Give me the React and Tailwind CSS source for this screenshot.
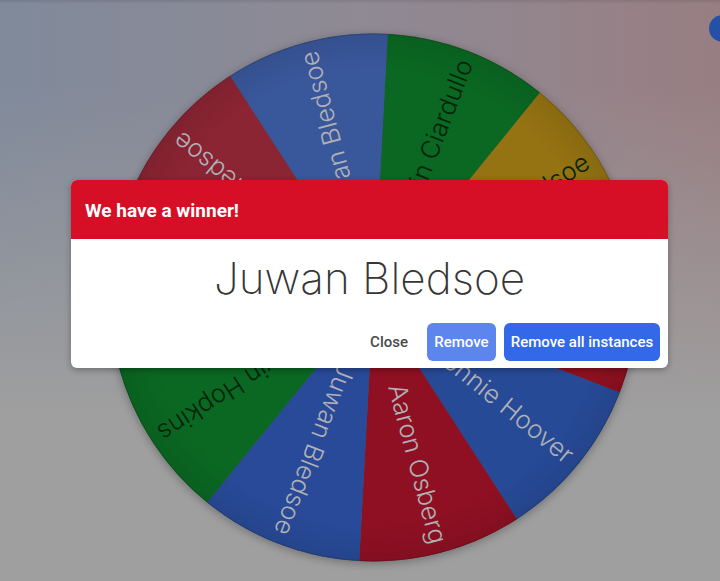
const SLICES = [
  { color: "#0a6822", text: "Kevin Ciardullo", dark: true },
  { color: "#957312", text: "Juwan Bledsoe", dark: true },
  { color: "#8e1020", text: "Aaron Osberg" },
  { color: "#274a97", text: "Donnie Hoover" },
  { color: "#8e1022", text: "Aaron Osberg" },
  { color: "#284a98", text: "Juwan Bledsoe" },
  { color: "#0a6822", text: "Kevin Hopkins", dark: true },
  { color: "#957312", text: "Kevin Ciardullo", dark: true },
  { color: "#8b2433", text: "Juwan Bledsoe" },
  { color: "#39579b", text: "Juwan Bledsoe" },
];

const CX = 373.5;
const CY = 297.5;
const R = 264;
const START = 3.1;

const point = (deg, r) => {
  const a = ((deg - 90) * Math.PI) / 180;
  return `${CX + r * Math.cos(a)} ${CY + r * Math.sin(a)}`;
};

const Wheel = () => (
  <svg width="720" height="581" viewBox="0 0 720 581" className="block">
    <defs>
      <radialGradient id="rim" gradientUnits="userSpaceOnUse" cx={CX} cy={CY} r={R}>
        <stop offset="0.86" stopColor="#000" stopOpacity="0" />
        <stop offset="1" stopColor="#000" stopOpacity="0.08" />
      </radialGradient>
      <filter id="shadow" x="-10%" y="-10%" width="120%" height="120%">
        <feDropShadow dx="0" dy="2" stdDeviation="5" floodColor="#000" floodOpacity="0.3" />
      </filter>
    </defs>
    <circle cx={CX} cy={CY} r={R} fill="#555" filter="url(#shadow)" />
    {SLICES.map((s, i) => {
      const a = START + i * 36;
      return (
        <path
          key={i}
          fill={s.color}
          d={`M${CX} ${CY} L${point(a, R)} A${R} ${R} 0 0 1 ${point(a + 36, R)} Z`}
        />
      );
    })}
    <circle cx={CX} cy={CY} r={R} fill="url(#rim)" />
    <circle cx={CX} cy={CY} r={R - 0.5} fill="none" stroke="#000" strokeOpacity="0.12" />
    {SLICES.map((s, i) => {
      const mid = START + i * 36 + 18;
      return (
        <text
          key={i}
          transform={`translate(${CX} ${CY}) rotate(${mid - 90})`}
          x="254"
          y="9"
          textAnchor="end"
          fontSize="25.5"
          fontWeight="300"
          fontFamily="Inter, sans-serif"
          fill={s.dark ? "#04230c" : "#b0b0b6"}
        >
          {s.text}
        </text>
      );
    })}
  </svg>
);

const App = () => {
  return (
    <div className="relative w-[720px] h-[581px] overflow-hidden bg-[#9f9f9f]">
      <div className="absolute inset-0 bg-[linear-gradient(90deg,#808a9b,#8f8a94_50%,#987e82)]" />
      <div className="absolute inset-0 bg-[linear-gradient(180deg,#9f9f9f00_15%,#9f9f9f_72%)]" />
      <div className="absolute inset-x-0 top-0 h-[4px] bg-gradient-to-b from-black/10 to-transparent" />
      <div className="absolute inset-0">
        <Wheel />
      </div>
      <div className="absolute top-[15px] right-[-16px] w-[27px] h-[27px] rounded-full bg-[#2450a8]" />
      <div className="absolute left-[71px] top-[180px] w-[597px] h-[188px] rounded-md bg-white overflow-hidden shadow-[0_2px_6px_rgba(0,0,0,0.3)] flex flex-col font-['Roboto',sans-serif]">
        <div className="h-[59px] bg-[#d60f26] flex items-center px-[14px] pt-[3px] text-white text-[19px] font-bold shrink-0">
          We have a winner!
        </div>
        <div className="text-center text-[#363636] text-[44px] font-extralight leading-none pt-[17px] font-['Inter',sans-serif]">
          Juwan Bledsoe
        </div>
        <div className="mt-auto flex justify-end items-center gap-2 pr-2 pb-[7px]">
          <button className="h-[38px] pl-[10px] pr-[11px] pt-[1px] text-[15px] font-medium text-[#4a4a4a]">Close</button>
          <button className="h-[38px] w-[69px] pt-[1px] rounded-md bg-[#5c86ee] text-white text-[15px] font-medium">Remove</button>
          <button className="h-[38px] w-[156px] pt-[1px] rounded-md bg-[#3369e8] text-white text-[15px] font-medium">Remove all instances</button>
        </div>
      </div>
    </div>
  );
};

export default App;
